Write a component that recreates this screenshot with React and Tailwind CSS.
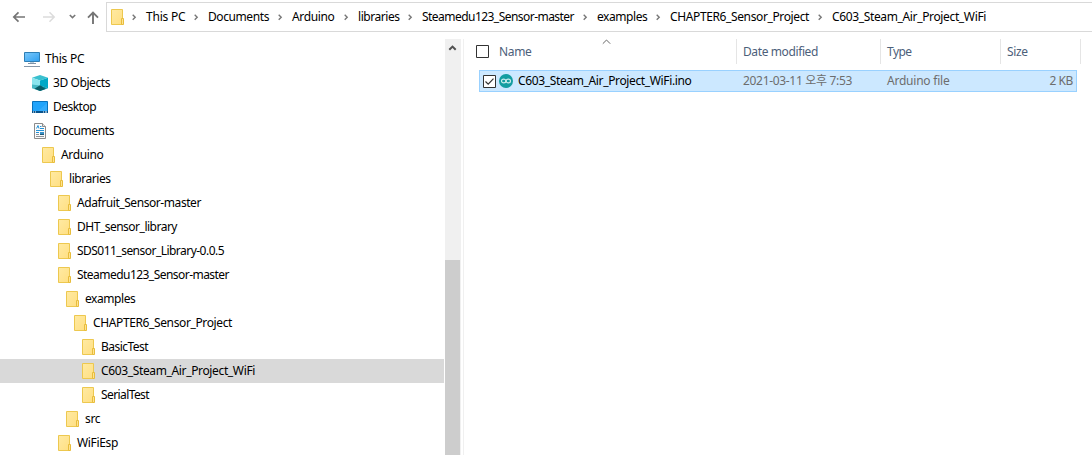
import { useLayoutEffect, useRef } from "react";

// Text run whose letter spacing is adjusted so that it fills a given width.
function Fit({ w, className = "", children }) {
  const ref = useRef(null);
  useLayoutEffect(() => {
    const el = ref.current;
    el.style.letterSpacing = "0px";
    const natural = el.getBoundingClientRect().width;
    el.style.letterSpacing = `${(w - natural) / children.length}px`;
  }, [w, children]);
  return (
    <span ref={ref} className={`inline-block shrink-0 whitespace-pre ${className}`}>
      {children}
    </span>
  );
}

function Folder() {
  return (
    <svg className="size-4 shrink-0" viewBox="0 0 16 16">
      <defs>
        <linearGradient id="folder" x1="0" y1="0" x2="1" y2="1">
          <stop offset="0" stopColor="#ffeaa3" />
          <stop offset="1" stopColor="#ffdf82" />
        </linearGradient>
      </defs>
      <path d="M2.5 .5h11v15h-11z" fill="url(#folder)" stroke="#edc84f" />
      <path d="M12.5 9.5h2v6h-2z" fill="#ffe391" stroke="#e8bd3c" />
    </svg>
  );
}

function Computer() {
  return (
    <svg className="size-4 shrink-0" viewBox="0 0 16 16">
      <defs>
        <linearGradient id="screen" x1="0" y1="0" x2="1" y2="1">
          <stop offset="0" stopColor="#7cc9fb" />
          <stop offset="1" stopColor="#2e9ff0" />
        </linearGradient>
      </defs>
      <path d="M.5 1.5h15v9H.5z" fill="url(#screen)" stroke="#2d7eb5" />
      <path d="M6 11h4v1H6z" fill="#b9cbd9" />
      <path d="M4 12h8v1H4z" fill="#7f93a8" />
      <path d="M0 15h16v1H0z" fill="#8797a8" />
    </svg>
  );
}

function Cube() {
  return (
    <svg className="size-4 shrink-0" viewBox="0 0 16 16">
      <path d="M8 0l8 2.7L8 5.5 0 2.7z" fill="#3ac0cf" />
      <path d="M0 2.7l8 2.8v5L0 13.3z" fill="#8ae5ee" />
      <path d="M16 2.7L8 5.5v5l8 2.8z" fill="#00a9c7" />
      <path d="M0 9.5l8 1V16l-8-2.7z" fill="#45b9c5" />
      <path d="M8 10.3l8 3L8 16z" fill="#0592a6" />
      <path d="M2.5 13.8L8 10.3l5.5 3.8L8 16z" fill="#075d67" />
    </svg>
  );
}

function Desktop() {
  return (
    <svg className="size-4 shrink-0" viewBox="0 0 16 16">
      <path d="M.5 2.5h15v11H.5z" fill="#21a4fb" stroke="#0872bd" />
      <path d="M6 12L15 4v8z" fill="#46b4fd" opacity=".5" />
      <path d="M0 12h16v2H0z" fill="#07538c" />
      <path d="M1 12.5h1v1H1zM3 12.5h1v1H3zM11 12.5h1v1h-1zM13 12.5h2v1h-2z" fill="#fff" />
    </svg>
  );
}

function Document() {
  return (
    <svg className="size-4 shrink-0" viewBox="0 0 16 16">
      <path d="M2.5 .5h8l3 3v12h-11z" fill="#fbfbfb" stroke="#8b8b8b" />
      <path d="M10.5 .5v3h3" fill="#e4e4e4" stroke="#8b8b8b" />
      <path d="M4.5 5.5L6 2.5l1 3M8 3.5h1.5M8 5.5h4M4 7.5h8M4 9.5h3" fill="none" stroke="#2492d6" />
      <path d="M8 9h4v3H8z" fill="#3a91c7" />
      <path d="M8 11h4v1H8z" fill="#235a77" />
      <path d="M4 11.5h3M4 13.5h8" stroke="#8d9399" />
    </svg>
  );
}

const crumbs = [
  { text: "This PC", w: 39.3, cell: "w-[62px]" },
  { text: "Documents", w: 61, cell: "w-[84px]" },
  { text: "Arduino", w: 42.5, cell: "w-[66px]" },
  { text: "libraries", w: 41.5, cell: "w-16" },
  { text: "Steamedu123_Sensor-master", w: 152, cell: "w-[175px]" },
  { text: "examples", w: 50.3, cell: "w-[73px]" },
  { text: "CHAPTER6_Sensor_Project", w: 139, cell: "w-[162px]" },
  { text: "C603_Steam_Air_Project_WiFi", w: 154, cell: "w-[170px]" },
];

const tree = [
  { text: "This PC", w: 39.3, pad: "pl-6", Icon: Computer },
  { text: "3D Objects", w: 57, pad: "pl-8", Icon: Cube },
  { text: "Desktop", w: 43, pad: "pl-8", Icon: Desktop },
  { text: "Documents", w: 61, pad: "pl-8", Icon: Document },
  { text: "Arduino", w: 42.5, pad: "pl-10", Icon: Folder },
  { text: "libraries", w: 41.5, pad: "pl-12", Icon: Folder },
  { text: "Adafruit_Sensor-master", w: 124, pad: "pl-14", Icon: Folder },
  { text: "DHT_sensor_library", w: 100, pad: "pl-14", Icon: Folder },
  { text: "SDS011_sensor_Library-0.0.5", w: 147, pad: "pl-14", Icon: Folder },
  { text: "Steamedu123_Sensor-master", w: 152, pad: "pl-14", Icon: Folder },
  { text: "examples", w: 50.3, pad: "pl-16", Icon: Folder },
  { text: "CHAPTER6_Sensor_Project", w: 139, pad: "pl-18", Icon: Folder },
  { text: "BasicTest", w: 47, pad: "pl-20", Icon: Folder },
  { text: "C603_Steam_Air_Project_WiFi", w: 154, pad: "pl-20", Icon: Folder, selected: true },
  { text: "SerialTest", w: 48, pad: "pl-20", Icon: Folder },
  { text: "src", w: 15.3, pad: "pl-16", Icon: Folder },
  { text: "WiFiEsp", w: 41, pad: "pl-14", Icon: Folder },
];

function Toolbar() {
  return (
    <header className="flex h-8 shrink-0 pt-0.5">
      <svg className="h-[30px] w-[106px] shrink-0" viewBox="0 0 106 30" fill="none">
        <path d="M25 15H14M18.5 10.3L13.8 15l4.7 4.7" stroke="#757575" strokeWidth="1.7" />
        <path d="M43 15h11M49.5 10.3l4.7 4.7-4.7 4.7" stroke="#dcdcdc" strokeWidth="1.5" />
        <path d="M69.8 13l2.7 2.6 2.7-2.6" stroke="#777" strokeWidth="1.6" />
        <path d="M93 22V11M88 15.7l5-5 5 5" stroke="#757575" strokeWidth="1.9" />
      </svg>
      <nav className="flex min-w-0 flex-1 items-center overflow-hidden border border-r-0 border-[#d9d9d9] pl-0.5">
        <Folder />
        <svg className="ml-1 mr-1.5 h-4 w-[11px] shrink-0" viewBox="0 0 11 16" fill="none">
          <path d="M3.7 5.7L6.2 8.2 3.7 10.7" stroke="#777" strokeWidth="1.4" />
        </svg>
        {crumbs.map((c, i) => (
          <div key={c.text} className={`flex shrink-0 items-center ${c.cell}`}>
            <Fit w={c.w}>{c.text}</Fit>
            {i < crumbs.length - 1 && (
              <svg className="ml-auto mr-1.5 h-4 w-[11px] shrink-0" viewBox="0 0 11 16" fill="none">
                <path d="M3.7 5.7L6.2 8.2 3.7 10.7" stroke="#777" strokeWidth="1.4" />
              </svg>
            )}
          </div>
        ))}
      </nav>
    </header>
  );
}

function Sidebar() {
  return (
    <aside className="flex w-[464px] shrink-0 border-r border-[#f0f0f0]">
      <ul className="w-[444px] pt-2">
        {tree.map(({ text, w, pad, Icon, selected }) => (
          <li
            key={text}
            className={`flex h-6 items-center gap-[5px] ${pad} ${selected ? "bg-[#d9d9d9]" : ""}`}
          >
            <Icon />
            <Fit w={w}>{text}</Fit>
          </li>
        ))}
      </ul>
      <div className="ml-px flex w-4 flex-col bg-[#f0f0f0]">
        <svg className="h-[221px] w-4 shrink-0" viewBox="0 0 16 221" fill="none">
          <path d="M4.3 10.8L7.5 7.6l3.2 3.2" stroke="#505050" strokeWidth="2" />
        </svg>
        <div className="w-[15px] flex-1 bg-[#cdcdcd]" />
      </div>
    </aside>
  );
}

function Checkbox({ checked }) {
  return (
    <svg className="size-[13px] shrink-0" viewBox="0 0 13 13">
      <path d="M.5 .5h12v12H.5z" fill="#fff" stroke="#333" />
      {checked && <path d="M2.5 6.5l2.7 2.7 5.3-5.5" fill="none" stroke="#333" strokeWidth="1.2" />}
    </svg>
  );
}

function FileList() {
  return (
    <main className="flex min-w-0 flex-1 flex-col">
      <div className="flex h-[25px] text-[#4c607a]">
        <div className="relative flex w-[273px] items-center border-r border-[#e5e5e5] pl-3">
          <Checkbox />
          <Fit w={32.5} className="ml-[10px]">Name</Fit>
          <svg className="absolute left-[138px] top-0 h-[6px] w-[9px]" viewBox="0 0 9 6" fill="none">
            <path d="M.8 4.7L4.5 1l3.7 3.7" stroke="#666" />
          </svg>
        </div>
        <div className="flex w-36 items-center border-r border-[#e5e5e5] pl-1.5">
          <Fit w={75}>Date modified</Fit>
        </div>
        <div className="flex w-[120px] items-center border-r border-[#e5e5e5] pl-1.5">
          <Fit w={24.5}>Type</Fit>
        </div>
        <div className="flex w-20 items-center border-r border-[#e5e5e5] pl-1.5">
          <Fit w={20.5}>Size</Fit>
        </div>
      </div>
      <div className="ml-[15px] mt-1.5 flex h-[22px] w-[598px] items-center border border-[#99d1ff] bg-[#cce8ff] text-[#6d6d6d]">
        <div className="flex w-[263px] items-center pl-[3px]">
          <Checkbox checked />
          <svg className="ml-[3px] size-[14px] shrink-0" viewBox="0 0 14 14" fill="none">
            <circle cx="7" cy="7" r="7" fill="#149da1" />
            <ellipse cx="4.7" cy="7" rx="2.2" ry="1.9" stroke="#c8ebeb" strokeWidth="1.2" />
            <ellipse cx="9.3" cy="7" rx="2.2" ry="1.9" stroke="#c8ebeb" strokeWidth="1.2" />
          </svg>
          <Fit w={173.5} className="ml-[5px] text-black">C603_Steam_Air_Project_WiFi.ino</Fit>
        </div>
        <div className="w-36">
          <Fit w={109}>2021-03-11 오후 7:53</Fit>
        </div>
        <div className="w-[120px]">
          <Fit w={62.5}>Arduino file</Fit>
        </div>
        <div className="flex flex-1 justify-end pr-[3px]">
          <Fit w={23.5}>2 KB</Fit>
        </div>
      </div>
    </main>
  );
}

export default function App() {
  return (
    <div className="flex h-screen w-full flex-col overflow-hidden bg-white font-['Noto_Sans','Noto_Sans_CJK_KR',sans-serif] text-[12px] leading-4 text-black">
      <Toolbar />
      <div className="flex min-h-0 flex-1 pt-[7px]">
        <Sidebar />
        <FileList />
      </div>
    </div>
  );
}
